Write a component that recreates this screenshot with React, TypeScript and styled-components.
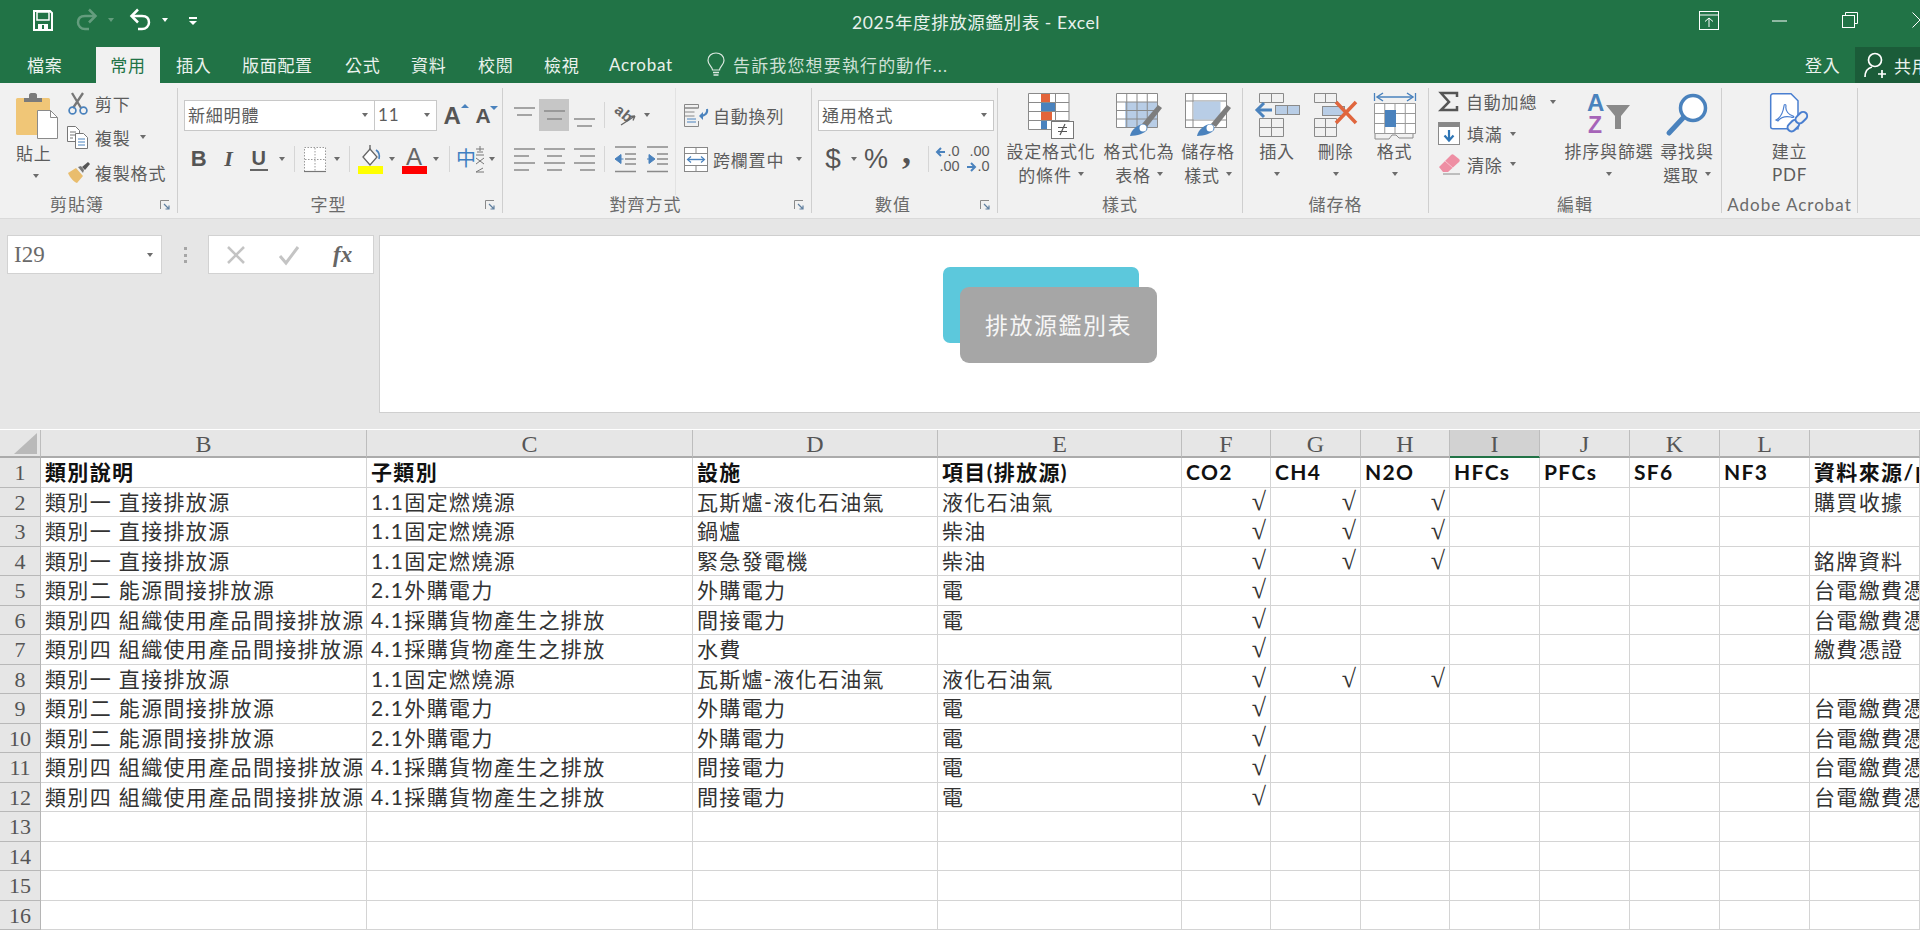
import React from "react";
import styled, { createGlobalStyle } from "styled-components";

const UI = `Lato, "Noto Sans CJK TC", sans-serif`;
const SERIF = `"Liberation Serif", "Noto Sans CJK TC", serif`;
const GREEN = "#217346";
const INK = "#5c5c5c";
const BLUE = "#4a82bd";

const Global = createGlobalStyle`
  html, body { margin: 0; padding: 0; background: #fff; overflow: hidden; }
  #root { width: 1920px; height: 930px; overflow: hidden; }
  * { box-sizing: border-box; }
`;

const Page = styled.div`
  width: 1920px; height: 930px; overflow: hidden; display: flex; flex-direction: column;
  font-family: ${UI}; position: relative;
`;

/* ---------- title bar ---------- */
const Head = styled.header`background: ${GREEN}; height: 83px; display: flex; flex-direction: column; color: #fff;`;
const TitleRow = styled.div`
  height: 47px; display: grid; grid-template-columns: 1fr auto 1fr; align-items: center;
`;
const Quick = styled.div`display: flex; align-items: center; padding-left: 33px; height: 100%; padding-bottom: 7px;`;
const QuickGap = styled.span<{ $w: number }>`width: ${p => p.$w}px; flex: none;`;
const Title = styled.div`font-size: 17.5px; letter-spacing: .6px; color: #e8f1ec; padding-bottom: 5px; margin-left: 32px;`;
const WinBtns = styled.div`display: flex; align-items: center; justify-content: flex-end; height: 100%; padding-bottom: 7px; overflow: hidden;`;
const WinSlot = styled.div<{ $w: number }>`width: ${p => p.$w}px; display: flex; justify-content: flex-start; flex: none;`;
const TabRow = styled.nav`height: 36px; display: flex; align-items: stretch;`;
const Tab = styled.div<{ $w: number; $active?: boolean; $pl?: number }>`
  width: ${p => p.$w}px; flex: none; display: flex; align-items: center; justify-content: ${p => (p.$pl !== undefined ? "flex-start" : "center")};
  padding-left: ${p => p.$pl ?? 0}px; padding-bottom: 2px; font-size: 17px; letter-spacing: .7px; white-space: nowrap;
  background: ${p => (p.$active ? "#f1f1f1" : "transparent")}; color: ${p => (p.$active ? GREEN : "#eaf2ed")};
`;
const Tell = styled.div`display: flex; align-items: center; gap: 8px; margin-left: 31px; padding-bottom: 2px; font-size: 17px; letter-spacing: 1.15px; color: #cfe0d6;`;
const TabFill = styled.div`flex: 1;`;
const SignIn = styled.div`width: 50px; display: flex; align-items: center; padding-bottom: 2px; font-size: 17px; letter-spacing: .7px; color: #eaf2ed;`;
const Share = styled.div`width: 65px; background: #1b5c39; display: flex; align-items: center; gap: 8px; padding-left: 9px; font-size: 17px; letter-spacing: .7px; white-space: nowrap; overflow: hidden; color: #eaf2ed;`;

/* ---------- ribbon ---------- */
const Ribbon = styled.section`height: 135px; background: #f1f1f1; padding: 5px 0; display: flex; border-bottom: 0;`;
const Group = styled.div<{ $w: number }>`
  width: ${p => p.$w}px; flex: none; display: flex; flex-direction: column; border-right: 1px solid #cfcfcf;
`;
const Body = styled.div<{ $pl?: number }>`height: 107px; display: flex; padding-left: ${p => p.$pl ?? 0}px; color: ${INK}; font-size: 17px; letter-spacing: .8px;`;
const Foot = styled.div<{ $launcher?: boolean }>`
  height: 18px; display: grid; grid-template-columns: 1fr auto 1fr; align-items: center; color: #6a6a6a; font-size: 17px; letter-spacing: 1px; line-height: 20px;
  padding-right: ${p => (p.$launcher ? 23 : 0)}px;
`;
const FootName = styled.span`grid-column: 2; white-space: nowrap;`;
const Launcher = styled.span`grid-column: 3; justify-self: end; margin-right: -17px; display: flex;`;

const Col = styled.div<{ $w?: number; $pt?: number; $sep?: boolean; $ml?: number }>`
  display: flex; flex-direction: column; flex: none; ${p => (p.$w ? `width:${p.$w}px;` : "")} padding-top: ${p => p.$pt ?? 0}px;
  margin-left: ${p => p.$ml ?? 0}px;
  ${p => (p.$sep ? "border-right: 1px solid #e2e2e2;" : "")}
`;
const Row = styled.div<{ $h: number; $mt?: number; $gap?: number; $ml?: number }>`
  height: ${p => p.$h}px; margin-top: ${p => p.$mt ?? 0}px; margin-left: ${p => p.$ml ?? 0}px; display: flex; align-items: center; gap: ${p => p.$gap ?? 0}px; white-space: nowrap; flex: none;
`;
const Tool = styled.div<{ $w: number; $on?: boolean }>`
  width: ${p => p.$w}px; height: 100%; flex: none; display: flex; align-items: center; justify-content: center;
  background: ${p => (p.$on ? "#c6c6c6" : "transparent")};
`;
const Sep = styled.div`width: 1px; height: 26px; background: #d6d6d6;`;
const Caret = styled.i<{ $ml?: number }>`
  display: inline-block; width: 0; height: 0; margin-left: ${p => p.$ml ?? 0}px; flex: none;
  border-left: 3.5px solid transparent; border-right: 3.5px solid transparent; border-top: 4px solid #6c6c6c;
`;
const Select = styled.div<{ $w: number; $ml?: number }>`
  width: ${p => p.$w}px; height: 31px; flex: none; background: #fff; border: 1px solid #c8c8c8; display: flex; align-items: center; margin-left: ${p => p.$ml ?? 0}px;
  justify-content: space-between; padding: 0 6px 2px 3px; font-size: 17px; letter-spacing: .8px; color: ${INK};
`;
const Big = styled.div<{ $w: number }>`width: ${p => p.$w}px; flex: none; display: flex; flex-direction: column; align-items: center; white-space: nowrap;`;
const BigIcon = styled.div`height: 50px; width: 100%; display: flex; align-items: flex-start; justify-content: center; padding-top: 5px;`;
const BigLine = styled.div`height: 24px; display: flex; align-items: center; gap: 6px; justify-content: center;`;
const Bold = styled.span`font: 700 22px "Liberation Sans", sans-serif; color: #555;`;
const Italic = styled.span`font: italic 700 22px ${SERIF}; color: #555;`;
const Under = styled.span`font: 700 20px "Liberation Sans", sans-serif; color: #555; border-bottom: 2px solid #666; line-height: 21px; padding: 0 1px;`;
const BigA = styled.span<{ $s: number }>`font: 700 ${p => p.$s}px "Liberation Sans", sans-serif; color: #555; position: relative;`;
const Tick = styled.i<{ $up?: boolean }>`
  position: absolute; top: 2px; right: -7px; width: 0; height: 0; border-left: 4px solid transparent; border-right: 4px solid transparent;
  ${p => (p.$up ? `border-bottom: 4px solid ${BLUE};` : `border-top: 4px solid ${BLUE};`)}
`;
const Sym = styled.span<{ $s: number }>`font: ${p => p.$s}px "Liberation Sans", sans-serif; color: #555; letter-spacing: 0;`;
const Comma = styled.span`font: 700 36px/20px "Liberation Serif", serif; color: #555; height: 20px; margin-top: -16px;`;
const Dec = styled.div`display: grid; grid-template-columns: auto; justify-items: end; font: 14.5px/15px "Liberation Sans", sans-serif; letter-spacing: 0; color: #5c5c5c;`;
const DecRow = styled.div`display: flex; align-items: center; gap: 1px;`;

/* ---------- formula bar ---------- */
const Bar = styled.section`height: 212px; background: #e6e6e6; padding-top: 16px; display: flex; align-items: flex-start; border-top: 1px solid #dadada;`;
const NameBox = styled.div`
  margin-left: 7px; width: 155px; height: 39px; background: #fff; border: 1px solid #d2d2d2; display: flex; align-items: center;
  justify-content: space-between; padding: 0 8px 0 6px; font: 23px ${SERIF}; color: #6a6a6a;
`;
const Dots = styled.div`width: 46px; display: flex; flex-direction: column; align-items: center; gap: 3.5px; margin-top: 12px;`;
const Dot = styled.i`width: 3px; height: 3px; background: #a6a6a6; display: block;`;
const FxBox = styled.div`width: 166px; height: 39px; background: #fff; border: 1px solid #d2d2d2; display: flex; align-items: center; padding-left: 18px; gap: 34px;`;
const Fx = styled.span`font: italic 700 23px ${SERIF}; color: #666;`;
const Formula = styled.div`margin-left: 5px; flex: 1; height: 178px; background: #fff; border: 1px solid #cfcfcf; border-right: 0;`;
const ShapeBack = styled.div`position: absolute; left: 943px; top: 267px; width: 196px; height: 76px; background: #5cc8dc; border-radius: 7px;`;
const ShapeFront = styled.div`
  position: absolute; left: 960px; top: 287px; width: 197px; height: 76px; background: #a6a6a6; border-radius: 9px; color: #f6f6f6;
  display: flex; align-items: center; justify-content: center; font-size: 23px; letter-spacing: 1.5px; padding-bottom: 2px;
`;

/* ---------- sheet ---------- */
const Sheet = styled.div`
  display: grid; grid-template-columns: 41px 326px 326px 245px 244px 89px 90px 89px 90px 90px 90px 90px 110px;
  grid-auto-rows: 29.5px; background: #fff; margin-top: -1px;
`;
const ColHead = styled.div<{ $sel?: boolean }>`
  height: 28px; align-self: end; background: ${p => (p.$sel ? "#d2d2d2" : "#e6e6e6")}; border-right: 1px solid #bdbdbd;
  border-bottom: 2px solid ${p => (p.$sel ? GREEN : "#ababab")}; display: flex; align-items: center; justify-content: center;
  font: 24px/26px ${SERIF}; color: #555; padding-top: 1px;
`;
const Corner = styled.div`height: 28px; align-self: end; background: #e6e6e6; border-bottom: 2px solid #ababab; border-right: 1px solid #bdbdbd; display: flex; justify-content: flex-end; align-items: center; padding-right: 3px;`;
const RowHead = styled.div`
  background: #e6e6e6; border-right: 1px solid #b5b5b5; border-bottom: 1px solid #b8b8b8; display: flex; align-items: center; justify-content: center;
  font: 22px ${SERIF}; color: #555; padding-top: 2px;
`;
const Cell = styled.div<{ $head?: boolean }>`
  border-right: 1px solid #d4d4d4; border-bottom: 1px solid #d4d4d4; white-space: nowrap; overflow: hidden; display: flex; align-items: center;
  padding: 0 5px 2px 4px; font-size: 21px; letter-spacing: 1.35px; color: ${p => (p.$head ? "#111" : "#333")}; font-weight: ${p => (p.$head ? 700 : 400)};
`;
const CheckCell = styled.div`
  border-right: 1px solid #d4d4d4; border-bottom: 1px solid #d4d4d4; display: flex; align-items: center; justify-content: flex-end;
  padding-right: 4px; font: 26px/26px ${SERIF}; color: #333;
`;

/* ---------- icons ---------- */
const Svg = ({ w, h, children }: { w: number; h: number; children: React.ReactNode }) => (
  <svg width={w} height={h} viewBox={`0 0 ${w} ${h}`} style={{ display: "block", flex: "none", overflow: "visible" }} fill="none">{children}</svg>
);
const Lines = ({ ys, short, align = "c" }: { ys: number[]; short: number; align?: "l" | "c" | "r" }) => (
  <Svg w={21} h={30}>
    {ys.map((y, i) => {
      const len = i % 2 ? short : 21;
      const x = align === "l" ? 0 : align === "r" ? 21 - len : (21 - len) / 2;
      return <path key={y} d={`M${x} ${y}h${len}`} stroke="#8a8a8a" strokeWidth="1.5" />;
    })}
  </Svg>
);
const LauncherIcon = () => (
  <Svg w={11} h={11}><path d="M.5 9V.5H9" stroke="#8a8a8a" /><path d="M4 4l5 5M9 5.5V9H5.5" stroke="#5f7f9f" strokeWidth="1.2" /></Svg>
);
const PasteIcon = () => (
  <Svg w={42} h={46}>
    <rect x="0" y="5" width="34" height="37" rx="1.5" fill="#f0c677" />
    <path d="M8 9V5h5V2c0-1 1-2 2-2h4c1 0 2 1 2 2v3h5v4z" fill="#7b7b7b" />
    <path d="M21.5 17.5h13l7 7v21h-20z" fill="#fff" stroke="#8a8a8a" />
    <path d="M34.5 17.5v7h7" stroke="#8a8a8a" />
  </Svg>
);
const CutIcon = () => (
  <Svg w={22} h={23}>
    <path d="M5 1l9 15M16 1L6 16" stroke="#777" strokeWidth="2.3" />
    <circle cx="5.5" cy="18.5" r="3.4" stroke={BLUE} strokeWidth="1.7" /><circle cx="16.5" cy="18.5" r="3.4" stroke={BLUE} strokeWidth="1.7" />
  </Svg>
);
const CopyIcon = () => (
  <Svg w={22} h={23}>
    <path d="M.5.5h8l4 4v11H.5z" fill="#fff" stroke="#777" /><path d="M3 6h6M3 9h6M3 12h3" stroke="#777" />
    <path d="M8.5 7.5h8l4 4v11h-12z" fill="#fff" stroke="#777" /><path d="M11 13h7M11 16h7M11 19h7" stroke={BLUE} />
  </Svg>
);
const BrushIcon = () => (
  <Svg w={24} h={22}>
    <path d="M1 12l8-5 7 8-6 7C7 21 3 17 1 12z" fill="#e9bd6d" />
    <path d="M11 6l3-1 3 4-1 3z" fill="#777" /><path d="M15 6l6-5 2 2-5 6z" fill="#555" />
  </Svg>
);
const BordersIcon = () => (
  <Svg w={22} h={25}>
    <rect x=".5" y=".5" width="21" height="24" fill="#fff" stroke="#9a9a9a" strokeDasharray="1.5 1.5" />
    <path d="M11 1v23M1 12.5h20" stroke="#9a9a9a" strokeDasharray="1.5 1.5" /><path d="M0 24.5h22" stroke="#777" strokeWidth="1.2" />
  </Svg>
);
const FillIcon = () => (
  <Svg w={25} h={30}>
    <path d="M5 13l7-8 7 8-7 8z" fill="#fff" stroke="#666" strokeWidth="1.3" /><path d="M12 5V1" stroke="#666" strokeWidth="1.4" />
    <path d="M18 6c3 2 4 5 3 9" stroke={BLUE} strokeWidth="1.6" /><rect y="22" width="25" height="8" fill="#ffff00" />
  </Svg>
);
const FontColorIcon = () => (
  <Svg w={25} h={30}>
    <text x="12.5" y="21" textAnchor="middle" fontFamily="Liberation Sans" fontSize="24" fill="#666">A</text>
    <rect y="22" width="25" height="8" fill="#ff0000" />
  </Svg>
);
const PhoneticIcon = () => (
  <Svg w={28} h={28}>
    <text x="-1" y="21" fontFamily="Noto Sans CJK TC" fontSize="20" fill="#3f7fc1">中</text>
    <path d="M23 1v5M19 4h8M20 7h6M19 10h8M19 13l8 6M27 13l-8 6M19 27l7-4M19 27h8" stroke="#777" />
  </Svg>
);
const OrientIcon = () => (
  <Svg w={22} h={22}>
    <text x="0" y="12" fontFamily="Liberation Sans" fontSize="15" fontWeight="700" fill="#666" transform="rotate(40 6 9)">ab</text>
    <path d="M7 21l14-9M21 12l-5 .5M21 12l-2 4.500" stroke="#666" strokeWidth="1.3" />
  </Svg>
);
const WrapIcon = () => (
  <Svg w={25} h={23}>
    <path d="M.5.5h14v3.5H.5zM.5 4h14M.5 8h10M.5 12h10M.5 4v18.5h14V17" stroke="#888" />
    <path d="M3 15h9M3 18h9" stroke={BLUE} />
    <path d="M23 5c1 4-2 7-7 7" stroke={BLUE} strokeWidth="2" /><path d="M19 8l-4 4 4 4z" fill={BLUE} />
  </Svg>
);
const MergeIcon = () => (
  <Svg w={24} h={25}>
    <rect x=".5" y=".5" width="23" height="24" fill="#fff" stroke="#888" /><path d="M1 6.5h22M1 18.5h22M12 1v5M12 19v5" stroke="#888" />
    <path d="M4 12.5h16" stroke={BLUE} strokeWidth="1.4" /><path d="M7 9.5l-3.5 3 3.5 3M17 9.5l3.5 3-3.5 3" stroke={BLUE} strokeWidth="1.2" />
  </Svg>
);
const IndentIcon = ({ out }: { out?: boolean }) => (
  <Svg w={23} h={28}>
    <path d="M1 2h21M1 26.500h21M11 9h11M11 14h11M11 19h11" stroke="#8a8a8a" strokeWidth="1.5" />
    {out ? <path d="M1 14l6-4.500v9zM6 14h3.500" fill={BLUE} stroke={BLUE} /> : <path d="M9 14L3 9.500v9zM1 14h4" fill={BLUE} stroke={BLUE} />}
  </Svg>
);
const DecArrow = ({ left }: { left?: boolean }) => (
  <Svg w={10} h={10}><path d={left ? "M9 5H2M5 1L1 5l4 4" : "M1 5h7M5 1l4 4-4 4"} stroke={BLUE} strokeWidth="2" /></Svg>
);
const GridLines = ({ x, y, cols, rows, cw, ch, c = "#8a8a8a" }: { x: number; y: number; cols: number; rows: number; cw: number; ch: number; c?: string }) => (
  <g stroke={c}>
    {Array.from({ length: cols + 1 }, (_, i) => <path key={`c${i}`} d={`M${x + i * cw} ${y}v${rows * ch}`} />)}
    {Array.from({ length: rows + 1 }, (_, i) => <path key={`r${i}`} d={`M${x} ${y + i * ch}h${cols * cw}`} />)}
  </g>
);
const CondIcon = () => (
  <Svg w={46} h={46}>
    <rect x=".5" y=".5" width="40" height="36" fill="#fff" />
    <GridLines x={.5} y={.5} cols={3} rows={4} cw={13.500} ch={9} />
    <rect x="13" y="1" width="9" height="8" fill="#e3643a" /><rect x="13" y="10" width="14" height="8" fill={BLUE} />
    <rect x="13" y="19" width="11" height="8" fill="#e3643a" /><rect x="13" y="28" width="6" height="8" fill={BLUE} />
    <rect x="23.500" y="28.500" width="22" height="17" fill="#fff" stroke="#777" />
    <path d="M30 34.500h9M30 38.500h9M37 31l-5 11" stroke="#555" strokeWidth="1.2" />
  </Svg>
);
const TableIcon = () => (
  <Svg w={46} h={44}>
    <rect x=".5" y=".5" width="41" height="34" fill="#fff" />
    <rect x="9" y="9" width="32" height="26" fill="#b8cde6" />
    <GridLines x={.5} y={.5} cols={4} rows={4} cw={10.250} ch={8.500} />
    <path d="M26 31L42 12l4 3-15 19z" fill="#7d7d7d" /><path d="M14 43c1-6 8-12 14-12 3 1 4 4 3 6-2 3-10 6-17 6z" fill={BLUE} /><circle cx="27" cy="35" r="3.500" fill="#fff" />
  </Svg>
);
const StyleIcon = () => (
  <Svg w={46} h={44}>
    <rect x=".5" y=".5" width="41" height="34" fill="#fff" stroke="#8a8a8a" />
    <path d="M.5 8h41M8 .5v34M.5 27h41" stroke="#8a8a8a" />
    <rect x="8.500" y="8.500" width="27" height="18" fill="#b8cde6" />
    <path d="M26 31L42 12l4 3-15 19z" fill="#7d7d7d" /><path d="M12 43c1-6 8-12 14-12 3 1 4 4 3 6-2 3-10 6-17 6z" fill={BLUE} /><circle cx="25" cy="35" r="3.500" fill="#fff" />
  </Svg>
);
const InsertIcon = () => (
  <Svg w={45} h={45}>
    <GridLines x={4.500} y={.5} cols={2} rows={1} cw={12} ch={9} />
    <GridLines x={4.500} y={25.500} cols={2} rows={2} cw={12} ch={9} />
    <rect x="20.500" y="12.500" width="24" height="9" fill="#b8cde6" stroke="#8a8a8a" /><path d="M32.500 13v8" stroke="#8a8a8a" />
    <path d="M17 17H3" stroke={BLUE} strokeWidth="3" /><path d="M9 10l-7 7 7 7" stroke={BLUE} strokeWidth="3" />
  </Svg>
);
const DeleteIcon = () => (
  <Svg w={44} h={45}>
    <GridLines x={.5} y={.5} cols={2} rows={1} cw={11} ch={9} />
    <GridLines x={.5} y={25.500} cols={2} rows={2} cw={11} ch={9} />
    <rect x="8.500" y="13.500" width="22" height="9" fill="#b8cde6" stroke="#8a8a8a" />
    <path d="M22 9l20 21M42 9L22 30" stroke="#e0663e" strokeWidth="3.500" />
  </Svg>
);
const FormatIcon = () => (
  <Svg w={42} h={46}>
    <path d="M.5 0v8M41.500 0v8M4 4h34" stroke={BLUE} strokeWidth="1.3" /><path d="M9 0L3 4l6 4M33 0l6 4-6 4" stroke={BLUE} strokeWidth="1.5" />
    <rect x=".5" y="10.500" width="41" height="30" fill="#fff" />
    <GridLines x={.5} y={10.500} cols={4} rows={3} cw={10.250} ch={10} c="#999" />
    <rect x="11" y="17" width="11" height="17" fill={BLUE} />
    <path d="M1 41v5h14l3-4 4 0 3 3h14v-4" stroke="#8a8a8a" />
  </Svg>
);
const SumIcon = () => (
  <Svg w={19} h={20}><path d="M18 5V1H2l8 9-8 8h16v-4" stroke="#555" strokeWidth="2.500" /></Svg>
);
const FillDownIcon = () => (
  <Svg w={22} h={23}>
    <rect x=".5" y=".5" width="21" height="22" fill="#fff" stroke="#8a8a8a" /><rect x="1" y="1" width="20" height="4" fill="#888" />
    <path d="M11 8v10M6.500 13.500l4.500 5 4.500-5" stroke="#2e75b5" strokeWidth="2.200" />
  </Svg>
);
const EraserIcon = () => (
  <Svg w={22} h={21}>
    <path d="M1 13L13 1c1-1 2-1 3 0l5 4c1 1 1 2 0 3L10 18H5z" fill="#ee8ea3" /><path d="M5 20h17" stroke="#8a8a8a" /><path d="M7 7l8 7" stroke="#f7c4d0" />
  </Svg>
);
const SortIcon = () => (
  <Svg w={44} h={42}>
    <text x="0" y="18" fontFamily="Liberation Sans" fontWeight="700" fontSize="24" fill={BLUE}>A</text>
    <text x="1" y="40" fontFamily="Liberation Sans" fontWeight="700" fontSize="23" fill="#a664b8">Z</text>
    <path d="M19 12h24l-9 11v13h-6V23z" fill="#8a8a8a" />
  </Svg>
);
const FindIcon = () => (
  <Svg w={42} h={43}>
    <circle cx="27" cy="15" r="12.500" fill="#fff" stroke={BLUE} strokeWidth="3.500" /><path d="M17 25L3 40" stroke={BLUE} strokeWidth="5" strokeLinecap="round" />
  </Svg>
);
const PdfIcon = () => (
  <Svg w={40} h={43}>
    <path d="M3 .8h18l7 7v28H3c-1.500 0-2.300-1-2.300-2V3C.7 2 1.500.8 3 .8z" stroke="#4a7fd0" strokeWidth="1.500" fill="#fff" />
    <path d="M6 27c4-2 7-7 8-14 0-2 2-2 2 0-1 5 3 9 7 10 2 1 0 2-2 1-5-1-10 0-13 4z" stroke="#4a7fd0" strokeWidth="1.200" />
    <g stroke="#4a7fd0" strokeWidth="2" fill="#f1f1f1">
      <rect x="17" y="29" width="13" height="8" rx="4" transform="rotate(-45 23 33)" />
      <rect x="25" y="21" width="13" height="8" rx="4" transform="rotate(-45 31 25)" />
    </g>
  </Svg>
);
const SaveIcon = () => (
  <Svg w={20} h={21}>
    <path d="M1 1h16l2 2v17H1z" stroke="#fff" strokeWidth="2" /><rect x="4" y="2" width="12" height="8" stroke="#fff" strokeWidth="1.500" />
    <rect x="5" y="14" width="10" height="6" fill="#fff" /><rect x="9" y="15" width="2" height="4" fill={GREEN} />
  </Svg>
);
const Flip = styled.span<{ $dim?: boolean }>`display: block; flex: none; ${p => (p.$dim ? "transform: scaleX(-1); opacity: .3;" : "")}`;
const UndoIcon = ({ dim }: { dim?: boolean }) => (
  <Flip $dim={dim}>
    <Svg w={22} h={24}>
      <path d="M3 8h10c5 0 7 3 7 6.500S17 21 13 21H9" stroke="#fff" strokeWidth="2.500" /><path d="M9 1.500L2.500 8 9 14.500" stroke="#fff" strokeWidth="2.500" />
    </Svg>
  </Flip>
);
const TitleCaret = styled.i<{ $dim?: boolean; $ml: number }>`
  display: block; width: 0; height: 0; margin-left: ${p => p.$ml}px; border-left: 3.5px solid transparent; border-right: 3.5px solid transparent;
  border-top: 4px solid #fff; opacity: ${p => (p.$dim ? 0.3 : 1)};
`;
const Customize = styled.i`display: block; margin-left: 21px; width: 8px; height: 2px; background: #fff; position: relative; top: -2px;
  &::after { content: ""; position: absolute; left: 0; top: 4px; border-left: 4px solid transparent; border-right: 4px solid transparent; border-top: 4px solid #fff; }
`;
const Bulb = () => (
  <Svg w={18} h={25}>
    <path d="M5.500 18c0-3-4.500-5-4.500-9.500C1 4 4.500 1 9 1s8 3 8 7.500c0 4.500-4.500 6.500-4.500 9.500z" stroke="#dce9e1" strokeWidth="1.200" />
    <path d="M6 20.500h6M6.500 23h5" stroke="#dce9e1" strokeWidth="1.500" />
  </Svg>
);
const PersonIcon = () => (
  <Svg w={22} h={26}>
    <circle cx="11" cy="8" r="6.500" stroke="#fff" strokeWidth="1.700" />
    <path d="M1 25c0-6 3-9 7-10M14 22h8M18 18v8" stroke="#fff" strokeWidth="1.700" />
  </Svg>
);

/* ---------- data ---------- */
const A = "類別一 直接排放源", B = "類別二 能源間接排放源", D = "類別四 組織使用產品間接排放源";
const S1 = "1.1固定燃燒源", S2 = "2.1外購電力", S4 = "4.1採購貨物產生之排放";
const BILL = "台電繳費憑證";
type Rec = [string, string, string, string, number, string];
const DATA: Rec[] = [
  [A, S1, "瓦斯爐-液化石油氣", "液化石油氣", 3, "購買收據"],
  [A, S1, "鍋爐", "柴油", 3, ""],
  [A, S1, "緊急發電機", "柴油", 3, "銘牌資料"],
  [B, S2, "外購電力", "電", 1, BILL],
  [D, S4, "間接電力", "電", 1, BILL],
  [D, S4, "水費", "", 1, "繳費憑證"],
  [A, S1, "瓦斯爐-液化石油氣", "液化石油氣", 3, ""],
  [B, S2, "外購電力", "電", 1, BILL],
  [B, S2, "外購電力", "電", 1, BILL],
  [D, S4, "間接電力", "電", 1, BILL],
  [D, S4, "間接電力", "電", 1, BILL],
];
const LETTERS = ["B", "C", "D", "E", "F", "G", "H", "I", "J", "K", "L", ""];
const HEADS = ["類別說明", "子類別", "設施", "項目(排放源)", "CO2", "CH4", "N2O", "HFCs", "PFCs", "SF6", "NF3", "資料來源/內容"];

const SheetGrid = () => (
  <Sheet>
    <Corner><Svg w={23} h={21}><path d="M23 0v21H0z" fill="#b9b9b9" /></Svg></Corner>
    {LETTERS.map((l, i) => <ColHead key={i} $sel={l === "I"}>{l}</ColHead>)}
    <RowHead>1</RowHead>
    {HEADS.map(h => <Cell key={h} $head>{h}</Cell>)}
    {DATA.map((r, i) => (
      <React.Fragment key={i}>
        <RowHead>{i + 2}</RowHead>
        <Cell>{r[0]}</Cell><Cell>{r[1]}</Cell><Cell>{r[2]}</Cell><Cell>{r[3]}</Cell>
        <CheckCell>√</CheckCell>
        <CheckCell>{r[4] === 3 ? "√" : ""}</CheckCell>
        <CheckCell>{r[4] === 3 ? "√" : ""}</CheckCell>
        <Cell /><Cell /><Cell /><Cell />
        <Cell>{r[5]}</Cell>
      </React.Fragment>
    ))}
    {[13, 14, 15, 16].map(n => (
      <React.Fragment key={n}>
        <RowHead>{n}</RowHead>
        {LETTERS.map((_, i) => <Cell key={i} />)}
      </React.Fragment>
    ))}
  </Sheet>
);

const Footer = ({ name, launcher }: { name: string; launcher?: boolean }) => (
  <Foot $launcher={launcher}><FootName>{name}</FootName>{launcher && <Launcher><LauncherIcon /></Launcher>}</Foot>
);

export default function App() {
  return (
    <Page>
      <Global />
      <Head>
        <TitleRow>
          <Quick>
            <SaveIcon />
            <QuickGap $w={23} />
            <UndoIcon dim />
            <TitleCaret $dim $ml={10} />
            <QuickGap $w={15} />
            <UndoIcon />
            <TitleCaret $ml={11} />
            <Customize />
          </Quick>
          <Title>2025年度排放源鑑別表 - Excel</Title>
          <WinBtns>
            <WinSlot $w={73}>
              <Svg w={20} h={19}><rect x=".5" y=".5" width="19" height="18" stroke="#fff" /><path d="M1 4h18M10 16V7M6 10.500L10 7l4 3.500" stroke="#fff" /></Svg>
            </WinSlot>
            <WinSlot $w={70}>
              <Svg w={15} h={15}><path d="M0 8h15" stroke="#fff" /></Svg>
            </WinSlot>
            <WinSlot $w={70}>
              <Svg w={16} h={16}><path d="M3.500 3V.5h12v11H13" stroke="#fff" /><rect x=".5" y="3.500" width="12" height="12" stroke="#fff" /></Svg>
            </WinSlot>
            <WinSlot $w={8}>
              <Svg w={16} h={16}><path d="M.5.500l15 15M15.500.500l-15 15" stroke="#fff" /></Svg>
            </WinSlot>
          </WinBtns>
        </TitleRow>
        <TabRow>
          <Tab $w={96} $pl={27}>檔案</Tab>
          <Tab $w={64} $active>常用</Tab>
          <Tab $w={66} $pl={16}>插入</Tab>
          <Tab $w={103} $pl={16}>版面配置</Tab>
          <Tab $w={66} $pl={16}>公式</Tab>
          <Tab $w={67} $pl={16}>資料</Tab>
          <Tab $w={66} $pl={16}>校閱</Tab>
          <Tab $w={65} $pl={16}>檢視</Tab>
          <Tab $w={83} $pl={16}>Acrobat</Tab>
          <Tell><Bulb />告訴我您想要執行的動作...</Tell>
          <TabFill />
          <SignIn>登入</SignIn>
          <Share><PersonIcon />共用</Share>
        </TabRow>
      </Head>

      <Ribbon>
        <Group $w={178}>
          <Body $pl={16}>
            <Col $w={42} $pt={5}>
              <PasteIcon />
              <Row $h={26}>貼上</Row>
              <Row $h={22} $ml={17}><Caret /></Row>
            </Col>
            <Col $w={120} $ml={9}>
              <Row $h={31} $gap={6}><CutIcon />剪下</Row>
              <Row $h={36} $gap={6}><CopyIcon />複製<Caret $ml={3} /></Row>
              <Row $h={34} $gap={4}><BrushIcon />複製格式</Row>
            </Col>
          </Body>
          <Footer name="剪貼簿" launcher />
        </Group>

        <Group $w={325}>
          <Body $pl={6}>
            <Col $pt={12}>
              <Row $h={31}>
                <Select $w={191}>新細明體<Caret /></Select>
                <Select $w={63} $ml={-1}>11<Caret /></Select>
                <Tool $w={31}><BigA $s={24}>A<Tick $up /></BigA></Tool>
                <Tool $w={31}><BigA $s={21}>A<Tick /></BigA></Tool>
              </Row>
              <Row $h={32} $mt={12}>
                <Tool $w={30}><Bold>B</Bold></Tool>
                <Tool $w={30}><Italic>I</Italic></Tool>
                <Tool $w={30}><Under>U</Under></Tool>
                <Tool $w={16}><Caret /></Tool>
                <Tool $w={8}><Sep /></Tool>
                <Tool $w={33}><BordersIcon /></Tool>
                <Tool $w={12}><Caret /></Tool>
                <Tool $w={12}><Sep /></Tool>
                <Tool $w={30}><FillIcon /></Tool>
                <Tool $w={14}><Caret /></Tool>
                <Tool $w={30}><FontColorIcon /></Tool>
                <Tool $w={14}><Caret /></Tool>
                <Tool $w={12}><Sep /></Tool>
                <Tool $w={32}><PhoneticIcon /></Tool>
                <Tool $w={10}><Caret /></Tool>
              </Row>
            </Col>
          </Body>
          <Footer name="字型" launcher />
        </Group>

        <Group $w={309}>
          <Body $pl={6}>
            <Col $w={167} $pt={11} $sep>
              <Row $h={32}>
                <Tool $w={30}><Lines ys={[8, 15]} short={15} /></Tool>
                <Tool $w={30} $on><Lines ys={[11, 19]} short={15} /></Tool>
                <Tool $w={31}><Lines ys={[19, 26]} short={15} /></Tool>
                <Tool $w={8}><Sep /></Tool>
                <Tool $w={34}><OrientIcon /></Tool>
                <Tool $w={10}><Caret /></Tool>
              </Row>
              <Row $h={32} $mt={12}>
                <Tool $w={30}><Lines ys={[5, 12, 19, 26]} short={15} align="l" /></Tool>
                <Tool $w={30}><Lines ys={[5, 12, 19, 26]} short={15} /></Tool>
                <Tool $w={31}><Lines ys={[5, 12, 19, 26]} short={15} align="r" /></Tool>
                <Tool $w={8}><Sep /></Tool>
                <Tool $w={34}><IndentIcon out /></Tool>
                <Tool $w={30}><IndentIcon /></Tool>
              </Row>
            </Col>
            <Col $pt={11} $ml={8}>
              <Row $h={32} $gap={4}><WrapIcon />自動換列</Row>
              <Row $h={32} $mt={12} $gap={5}><MergeIcon />跨欄置中<Caret $ml={7} /></Row>
            </Col>
          </Body>
          <Footer name="對齊方式" launcher />
        </Group>

        <Group $w={186}>
          <Body $pl={6}>
            <Col $pt={12}>
              <Row $h={31}><Select $w={176}>通用格式<Caret /></Select></Row>
              <Row $h={32} $mt={12}>
                <Tool $w={30}><Sym $s={28}>$</Sym></Tool>
                <Tool $w={12}><Caret /></Tool>
                <Tool $w={32}><Sym $s={27}>%</Sym></Tool>
                <Tool $w={30}><Comma>,</Comma></Tool>
                <Tool $w={12}><Sep /></Tool>
                <Tool $w={28}><Dec><DecRow><DecArrow left />.0</DecRow><DecRow>.00</DecRow></Dec></Tool>
                <Tool $w={32}><Dec><DecRow>.00</DecRow><DecRow><DecArrow />.0</DecRow></Dec></Tool>
              </Row>
            </Col>
          </Body>
          <Footer name="數值" launcher />
        </Group>

        <Group $w={245}>
          <Body $pl={5}>
            <Big $w={96}><BigIcon><CondIcon /></BigIcon><BigLine>設定格式化</BigLine><BigLine>的條件<Caret /></BigLine></Big>
            <Big $w={80}><BigIcon><TableIcon /></BigIcon><BigLine>格式化為</BigLine><BigLine>表格<Caret /></BigLine></Big>
            <Big $w={58}><BigIcon><StyleIcon /></BigIcon><BigLine>儲存格</BigLine><BigLine>樣式<Caret /></BigLine></Big>
          </Body>
          <Footer name="樣式" />
        </Group>

        <Group $w={186}>
          <Body $pl={5}>
            <Big $w={58}><BigIcon><InsertIcon /></BigIcon><BigLine>插入</BigLine><BigLine><Caret /></BigLine></Big>
            <Big $w={59}><BigIcon><DeleteIcon /></BigIcon><BigLine>刪除</BigLine><BigLine><Caret /></BigLine></Big>
            <Big $w={59}><BigIcon><FormatIcon /></BigIcon><BigLine>格式</BigLine><BigLine><Caret /></BigLine></Big>
          </Body>
          <Footer name="儲存格" />
        </Group>

        <Group $w={293}>
          <Body $pl={9}>
            <Col $w={126}>
              <Row $h={27} $gap={7}><Tool $w={21}><SumIcon /></Tool>自動加總<Caret $ml={6} /></Row>
              <Row $h={37} $gap={7}><FillDownIcon />填滿<Caret $ml={0} /></Row>
              <Row $h={24} $gap={7}><EraserIcon />清除<Caret $ml={0} /></Row>
            </Col>
            <Big $w={90}><BigIcon><SortIcon /></BigIcon><BigLine>排序與篩選</BigLine><BigLine><Caret /></BigLine></Big>
            <Big $w={66}><BigIcon><FindIcon /></BigIcon><BigLine>尋找與</BigLine><BigLine>選取<Caret /></BigLine></Big>
          </Body>
          <Footer name="編輯" />
        </Group>

        <Group $w={136}>
          <Body>
            <Big $w={135}><BigIcon><PdfIcon /></BigIcon><BigLine>建立</BigLine><BigLine>PDF</BigLine></Big>
          </Body>
          <Footer name="Adobe Acrobat" />
        </Group>
      </Ribbon>

      <Bar>
        <NameBox>I29<Caret /></NameBox>
        <Dots><Dot /><Dot /><Dot /></Dots>
        <FxBox>
          <Svg w={18} h={18}><path d="M1 1l16 16M17 1L1 17" stroke="#c4c4c4" strokeWidth="2.500" /></Svg>
          <Svg w={20} h={18}><path d="M1 10l6 7L19 1" stroke="#c4c4c4" strokeWidth="3" /></Svg>
          <Fx>fx</Fx>
        </FxBox>
        <Formula />
      </Bar>
      <SheetGrid />
      <ShapeBack />
      <ShapeFront>排放源鑑別表</ShapeFront>
    </Page>
  );
}
